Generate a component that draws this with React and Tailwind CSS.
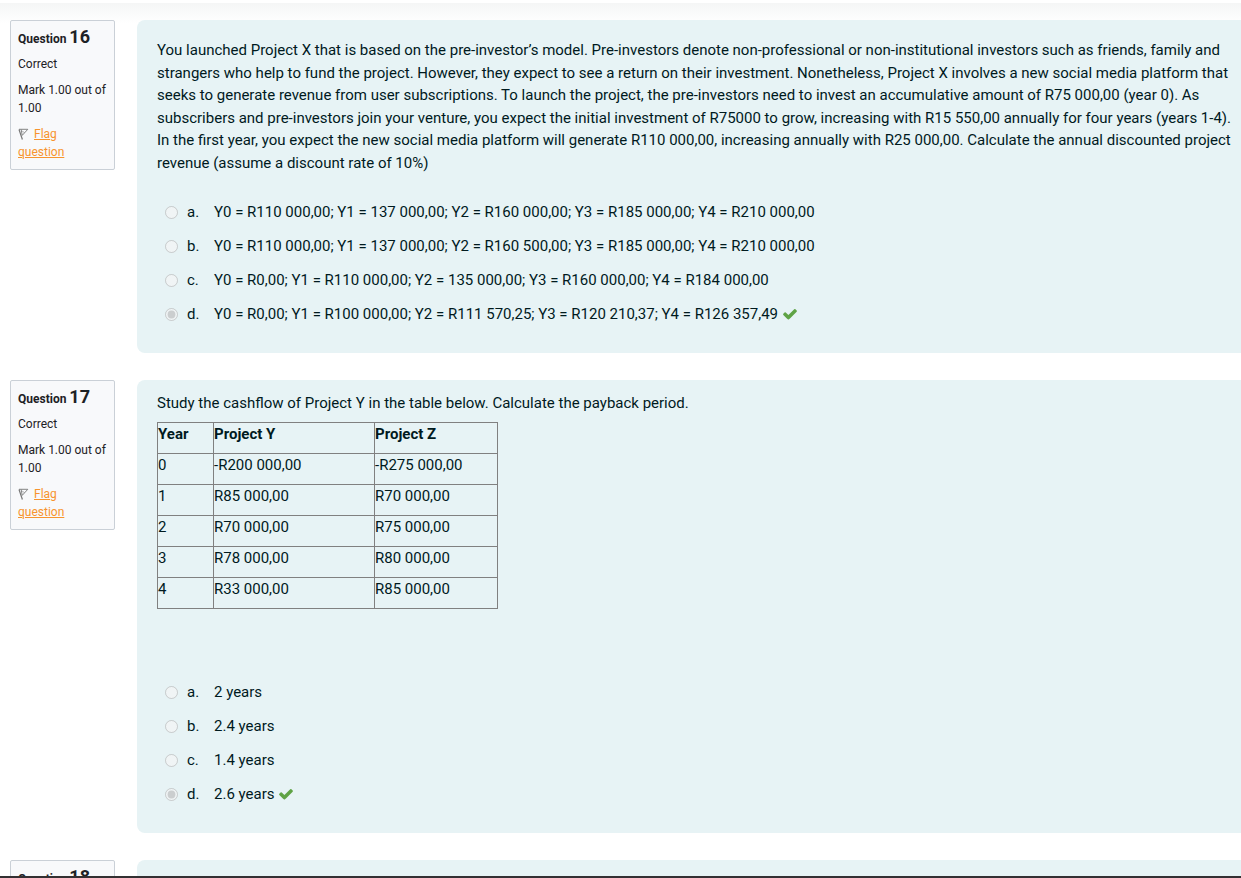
const questions = [
  {
    number: 16,
    text: 'You launched Project X that is based on the pre-investor’s model. Pre-investors denote non-professional or non-institutional investors such as friends, family and strangers who help to fund the project. However, they expect to see a return on their investment. Nonetheless, Project X involves a new social media platform that seeks to generate revenue from user subscriptions. To launch the project, the pre-investors need to invest an accumulative amount of R75 000,00 (year 0). As subscribers and pre-investors join your venture, you expect the initial investment of R75000 to grow, increasing with R15 550,00 annually for four years (years 1-4). In the first year, you expect the new social media platform will generate R110 000,00, increasing annually with R25 000,00. Calculate the annual discounted project revenue (assume a discount rate of 10%)',
    options: [
      'Y0 = R110 000,00; Y1 = 137 000,00; Y2 = R160 000,00; Y3 = R185 000,00; Y4 = R210 000,00',
      'Y0 = R110 000,00; Y1 = 137 000,00; Y2 = R160 500,00; Y3 = R185 000,00; Y4 = R210 000,00',
      'Y0 = R0,00; Y1 = R110 000,00; Y2 = 135 000,00; Y3 = R160 000,00; Y4 = R184 000,00',
      'Y0 = R0,00; Y1 = R100 000,00; Y2 = R111 570,25; Y3 = R120 210,37; Y4 = R126 357,49',
    ],
    chosen: 3,
  },
  {
    number: 17,
    text: 'Study the cashflow of Project Y in the table below. Calculate the payback period.',
    table: {
      head: ['Year', 'Project Y', 'Project Z'],
      rows: [
        ['0', '-R200 000,00', '-R275 000,00'],
        ['1', 'R85 000,00', 'R70 000,00'],
        ['2', 'R70 000,00', 'R75 000,00'],
        ['3', 'R78 000,00', 'R80 000,00'],
        ['4', 'R33 000,00', 'R85 000,00'],
      ],
    },
    options: ['2 years', '2.4 years', '1.4 years', '2.6 years'],
    chosen: 3,
  },
  { number: 18, text: '', options: [] },
];

function Check() {
  return (
    <svg role="img" aria-label="Correct" viewBox="0 0 1792 1792" className="ml-1 inline-block size-4 align-[-3px] fill-[#5fa345]">
      <path d="M1671 566q0 40-28 68l-724 724-136 136q-28 28-68 28t-68-28l-136-136-362-362q-28-28-28-68t28-68l136-136q28-28 68-28t68 28l294 295 656-657q28-28 68-28t68 28l136 136q28 28 28 68z" />
    </svg>
  );
}

function Flag() {
  return (
    <svg aria-hidden="true" viewBox="0 0 12 12" className="mr-1 inline-block size-3 align-[-2px]" fill="none" stroke="#777" strokeWidth="1">
      <path d="M1 1.5L4.4 11.5" strokeWidth="1.2" />
      <path d="M1 1.3H9.8L6.6 4.8L4.2 7.4L3.2 1.5" strokeWidth="0.9" />
      <path d="M4.2 3.2L6.6 4.6" strokeWidth="0.6" />
    </svg>
  );
}

function Info({ number }) {
  return (
    <aside className="w-[105px] shrink-0 rounded-xs border border-[#cad0d7] bg-[#f8f9fb] px-[7px] pt-1.5 pb-2 text-xs leading-[18px] text-[#1d2125]">
      <h3 className="mb-1.5 font-bold leading-5">
        Question <span className="text-lg leading-5">{number}</span>
      </h3>
      <div className="mb-2">Correct</div>
      <div className="mb-2">Mark 1.00 out of 1.00</div>
      <div className="pr-2">
        <Flag />
        <a href="#flag" className="text-[#f7942f] underline">Flag question</a>
      </div>
    </aside>
  );
}

function CashflowTable({ table }) {
  return (
    <table className="mt-2 mb-[66px] table-fixed border-collapse text-left">
      <colgroup>
        <col className="w-14" />
        <col className="w-[161px]" />
        <col className="w-[123px]" />
      </colgroup>
      <thead>
        <tr className="h-[31px] align-top">
          {table.head.map((h) => (
            <th key={h} className="border border-[#808080] p-0 font-bold">{h}</th>
          ))}
        </tr>
      </thead>
      <tbody>
        {table.rows.map((row) => (
          <tr key={row[0]} className="h-[31px] align-top">
            {row.map((cell, i) => (
              <td key={i} className="border border-[#808080] p-0">{cell}</td>
            ))}
          </tr>
        ))}
      </tbody>
    </table>
  );
}

function Question({ q }) {
  return (
    <section className="flex items-start gap-[22px]">
      <Info number={q.number} />
      <div className={`min-w-0 flex-1 rounded-l-lg bg-[#e7f3f5] pr-2 pb-[22px] pl-5 text-[15px] leading-normal text-[#001a1e] ${q.table ? 'pt-3' : 'pt-[19px]'}`}>
        <p className={q.table ? 'leading-[22px]' : ''}>{q.text}</p>
        {q.table && <CashflowTable table={q.table} />}
        {q.options.length > 0 && (
          <div className={q.table ? '' : 'mt-[21px]'}>
            {q.options.map((option, i) => {
              const id = `q${q.number}-${i}`;
              return (
                <div key={id} className="flex h-[34px] items-center pl-2">
                  <input id={id} type="radio" name={`q${q.number}`} disabled defaultChecked={q.chosen === i} className="mr-[9px] size-[13px] shrink-0" />
                  <label htmlFor={id} className="flex">
                    <span className="w-[27px] shrink-0">{'abcd'[i]}.</span>
                    <span>
                      {option}
                      {q.chosen === i && <Check />}
                    </span>
                  </label>
                </div>
              );
            })}
          </div>
        )}
      </div>
    </section>
  );
}

export default function App() {
  return (
    <div className="flex h-screen flex-col bg-white font-[Roboto,sans-serif]">
      <header className="h-[3px] shrink-0 bg-white" />
      <main className="flex min-h-0 flex-1 flex-col gap-[27px] overflow-hidden bg-linear-to-b from-[#f5f6f6] to-white to-[20px] pt-[17px] pl-2.5">
        {questions.map((q) => (
          <Question key={q.number} q={q} />
        ))}
      </main>
      <footer className="h-0.5 shrink-0 bg-[#333032]" />
    </div>
  );
}
